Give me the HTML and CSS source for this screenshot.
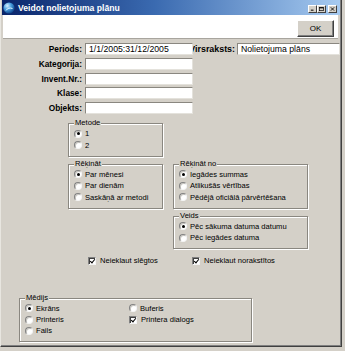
FILE: index.html
```html
<!DOCTYPE html>
<html lang="lv">
<head>
  <meta charset="UTF-8" />
  <meta name="viewport" content="width=device-width, initial-scale=1" />
  <title>Veidot nolietojuma plānu</title>
  <link rel="stylesheet" href="styles.css">
</head>
<body>

  <div class="window">
    <div class="titlebar">
      <svg class="app-icon" width="12" height="12" viewBox="0 0 12 12">
        <defs>
          <radialGradient id="globe" cx="0.35" cy="0.3" r="0.75">
            <stop offset="0" stop-color="#d8f0ff" />
            <stop offset="0.45" stop-color="#4aa0e0" />
            <stop offset="1" stop-color="#0c3f86" />
          </radialGradient>
        </defs>
        <circle cx="6" cy="6" r="5.6" fill="url(#globe)" />
        <path d="M3 8.5 C4.5 6 7 5.5 9.5 6.5" stroke="#e8f6ff" stroke-width="1" fill="none" />
      </svg>
      <span class="title">Veidot nolietojuma plānu</span>
      <div class="caption-btns">
        <span class="cap-btn">
          <svg width="7" height="6" viewBox="0 0 7 6"><rect x="1" y="4" width="4" height="1.5" fill="#000" /></svg>
        </span>
        <span class="cap-btn">
          <svg width="7" height="6" viewBox="0 0 7 6"><rect x="0.5" y="0.5" width="6" height="5" fill="none" stroke="#000" stroke-width="1" /><rect x="0.5" y="0.5" width="6" height="1.5" fill="#000" /></svg>
        </span>
        <span class="cap-btn close">
          <svg width="7" height="6" viewBox="0 0 7 6"><path d="M1 0.5 L6 5.5 M6 0.5 L1 5.5" stroke="#000" stroke-width="1.3" /></svg>
        </span>
      </div>
    </div>

    <div class="toolbar">
      <button class="ok-btn" type="button">OK</button>
    </div>

    <div class="fields">
      <div class="field-row">
        <label class="field-label">Periods:</label>
        <input class="field-input period-input" type="text" value="1/1/2005:31/12/2005" />
        <label class="field-label heading-label">Virsraksts:</label>
        <input class="field-input heading-input" type="text" value="Nolietojuma plāns" />
      </div>
      <div class="field-row">
        <label class="field-label">Kategorija:</label>
        <input class="field-input" type="text" />
      </div>
      <div class="field-row">
        <label class="field-label">Invent.Nr.:</label>
        <input class="field-input" type="text" />
      </div>
      <div class="field-row">
        <label class="field-label">Klase:</label>
        <input class="field-input" type="text" />
      </div>
      <div class="field-row">
        <label class="field-label">Objekts:</label>
        <input class="field-input" type="text" />
      </div>
    </div>

    <div class="groups">
      <div class="group group-metode">
        <span class="group-legend">Metode</span>
        <div class="opt"><span class="radio checked"></span>1</div>
        <div class="opt"><span class="radio"></span>2</div>
      </div>

      <div class="group group-calc">
        <span class="group-legend">Rēķināt</span>
        <div class="opt"><span class="radio checked"></span>Par mēnesi</div>
        <div class="opt"><span class="radio"></span>Par dienām</div>
        <div class="opt"><span class="radio"></span>Saskāņā ar metodi</div>
      </div>

      <div class="group group-from">
        <span class="group-legend">Rēķināt no</span>
        <div class="opt"><span class="radio checked"></span>Iegādes summas</div>
        <div class="opt"><span class="radio"></span>Atlikušās vērtības</div>
        <div class="opt"><span class="radio"></span>Pēdējā oficiālā pārvērtēšana</div>
      </div>

      <div class="group group-kind">
        <span class="group-legend">Veids</span>
        <div class="opt"><span class="radio checked"></span>Pēc sākuma datuma datumu</div>
        <div class="opt"><span class="radio"></span>Pēc iegādes datuma</div>
      </div>
    </div>

    <div class="checks">
      <div class="opt check-item"><span class="checkbox checked"></span>Neieklaut slēgtos</div>
      <div class="opt check-item"><span class="checkbox checked"></span>Neieklaut norakstītos</div>
    </div>

    <div class="group group-media">
      <span class="group-legend">Mēdijs</span>
      <div class="media-cols">
        <div class="media-col">
          <div class="opt"><span class="radio checked"></span>Ekrāns</div>
          <div class="opt"><span class="radio"></span>Printeris</div>
          <div class="opt"><span class="radio"></span>Fails</div>
        </div>
        <div class="media-col">
          <div class="opt"><span class="radio"></span>Buferis</div>
          <div class="opt"><span class="checkbox checked"></span>Printera dialogs</div>
        </div>
      </div>
    </div>
  </div>

</body>
</html>
```

FILE: styles.css
```css
* {
  box-sizing: border-box;
  margin: 0;
  padding: 0;
}

body {
  font-family: 'Liberation Sans', Arial, sans-serif;
  background: #d4d0c8;
  width: 345px;
  height: 351px;
  overflow: hidden;
  color: #000;
}

.window {
  width: 342px;
  height: 347px;
  background: #d4d0c8;
  border: 1px solid;
  border-top: none;
  border-color: #d4d0c8 #404040 #404040 #e8e6e0;
  box-shadow: inset -1px -1px 0 #808080;
  padding: 0 1px 0 1px;
}

/* title bar */
.titlebar {
  height: 15px;
  display: flex;
  align-items: center;
  background: linear-gradient(to right, #0a246a, #3a6ab0 45%, #a6caf0);
  padding-left: 1px;
}

.app-icon {
  display: block;
  margin-right: 3px;
}

.title {
  color: #fff;
  font-weight: 700;
  font-size: 8.6px;
  white-space: nowrap;
  flex: 1;
}

.caption-btns {
  display: flex;
  margin-right: 3px;
  margin-top: 2px;
}

.cap-btn {
  width: 9px;
  height: 8px;
  background: #d4d0c8;
  border: 1px solid;
  border-color: #fff #404040 #404040 #fff;
  display: flex;
  align-items: center;
  justify-content: center;
}

.cap-btn svg {
  display: block;
  width: 5px;
  height: 4px;
}

.cap-btn.close {
  margin-left: 2px;
}

/* toolbar */
.toolbar {
  height: 24px;
  background: #fff;
  margin: 0 2px 0 1px;
  border-bottom: 1px solid #a8a59e;
  display: flex;
  justify-content: flex-end;
  align-items: flex-start;
  padding: 5px 4px 0 0;
}

.ok-btn {
  width: 37px;
  height: 17px;
  font-family: 'Liberation Sans', Arial, sans-serif;
  font-size: 8px;
  color: #000;
  background: #d4d0c8;
  border: 1px solid;
  border-color: #fff #404040 #404040 #fff;
  box-shadow: inset -1px -1px 0 #808080;
}

/* text fields */
.fields {
  margin-top: 4px;
}

.field-row {
  display: flex;
  align-items: center;
  height: 12px;
  margin-bottom: 2.75px;
}

.field-label {
  width: 80px;
  text-align: right;
  font-weight: 700;
  font-size: 8.3px;
  white-space: nowrap;
  margin-right: 3px;
}

.field-input {
  width: 108px;
  height: 12px;
  font-family: 'Liberation Sans', Arial, sans-serif;
  font-size: 8.7px;
  color: #000;
  background: #fff;
  border: 1px solid;
  border-color: #8a8780 #e4e2dc #e4e2dc #8a8780;
  padding: 0 0 0 3px;
  outline: none;
}

.period-input {
  position: relative;
  z-index: 1;
}

/* the "V" slips under the Periods box, as in the original dialog */
.heading-label {
  width: 50px;
  margin-left: -8px;
  margin-right: 2px;
  font-size: 8.9px;
}

.heading-input {
  width: 103px;
}

/* option groups */
.groups {
  display: grid;
  grid-template-columns: 95px 135px;
  column-gap: 10px;
  row-gap: 7px;
  margin: 9.25px 0 0 66px;
}

.group {
  border: 1px solid #8a8780;
  box-shadow: inset 1px 1px 0 #fff, 1px 1px 0 #fff;
  padding: 0 0 5px 5px;
  font-size: 7.6px;
}

.group-metode {
  grid-column: 1;
  grid-row: 1;
}

.group-calc {
  grid-column: 1;
  grid-row: 2;
}

.group-from {
  grid-column: 2;
  grid-row: 2;
}

.group-kind {
  grid-column: 2;
  grid-row: 3;
}

.group-legend {
  display: block;
  width: max-content;
  height: 10px;
  line-height: 10px;
  margin: -6px 0 0 0;
  padding: 0 1px;
  background: #d4d0c8;
}

.opt {
  display: flex;
  align-items: center;
  height: 11.3px;
  font-size: 7.6px;
  white-space: nowrap;
}

.radio {
  width: 8px;
  height: 8px;
  border-radius: 50%;
  background: #fff;
  border: 1px solid;
  border-color: #808080 #f4f4f4 #f4f4f4 #808080;
  box-shadow: inset 1px 1px 0 #c8c6c0;
  margin-right: 3px;
  display: flex;
  align-items: center;
  justify-content: center;
  flex-shrink: 0;
}

.radio.checked::after {
  content: "";
  width: 3px;
  height: 3px;
  border-radius: 50%;
  background: #000;
}

.checkbox {
  width: 8px;
  height: 8px;
  background: #fff;
  border: 1px solid;
  border-color: #808080 #f4f4f4 #f4f4f4 #808080;
  box-shadow: inset 1px 1px 0 #404040;
  margin-right: 4px;
  flex-shrink: 0;
  position: relative;
}

.checkbox.checked::after {
  content: "";
  position: absolute;
  left: 1.5px;
  top: 0;
  width: 2px;
  height: 4px;
  border: solid #000;
  border-width: 0 1.3px 1.3px 0;
  transform: rotate(40deg);
}

/* checkbox row */
.checks {
  display: flex;
  margin: 6px 0 0 86px;
}

.check-item {
  width: 104px;
}

/* output media */
.group-media {
  width: 233px;
  margin: 31px 0 0 17px;
  padding-bottom: 4px;
}

.media-cols {
  display: flex;
}

.media-col:first-child {
  width: 104px;
}
```
